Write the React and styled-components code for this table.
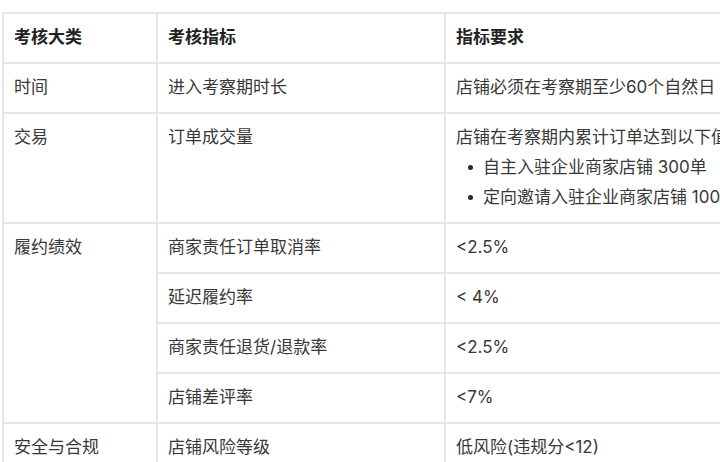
import React from "react";
import styled, { createGlobalStyle } from "styled-components";

const Global = createGlobalStyle`
  html, body { margin: 0; padding: 0; background: #fff; overflow: hidden; }
  body { width: 720px; height: 462px; }
`;

const Page = styled.div`
  padding: 12px 0 0 2px;
  width: 720px;
  overflow: hidden;
  font-family: Inter, "Noto Sans CJK SC", sans-serif;
`;

const Table = styled.table`
  border-collapse: collapse;
  table-layout: fixed;
  width: 900px;
  font-size: 17px;
  line-height: 24px;
  color: #383838;
`;

const Cell = styled.td`
  border: 2px solid #e6e6e6;
  padding: 11px 10px 13px;
  vertical-align: top;
  text-align: left;
  white-space: nowrap;
`;

const Head = styled(Cell).attrs({ as: "th" })`
  font-weight: 700;
  color: #222;
`;

const Bullets = styled.ul`
  margin: 0;
  padding: 0;
  list-style: none;
`;

const Bullet = styled.li`
  margin-top: 6px;
  display: flex;
  align-items: center;
`;

const Dot = styled.span`
  flex: none;
  width: 5px;
  height: 5px;
  border-radius: 50%;
  background: #2a2a2a;
  margin: 0 10px 0 12px;
`;

const perf = [
  ["商家责任订单取消率", "<2.5%"],
  ["延迟履约率", "< 4%"],
  ["商家责任退货/退款率", "<2.5%"],
  ["店铺差评率", "<7%"],
];

export default function App() {
  return (
    <>
      <Global />
      <Page>
        <Table>
          <colgroup>
            <col style={{ width: 154 }} />
            <col style={{ width: 288 }} />
            <col />
          </colgroup>
          <thead>
            <tr>
              <Head>考核大类</Head>
              <Head>考核指标</Head>
              <Head>指标要求</Head>
            </tr>
          </thead>
          <tbody>
            <tr>
              <Cell>时间</Cell>
              <Cell>进入考察期时长</Cell>
              <Cell>店铺必须在考察期至少60个自然日</Cell>
            </tr>
            <tr>
              <Cell>交易</Cell>
              <Cell>订单成交量</Cell>
              <Cell>
                店铺在考察期内累计订单达到以下值
                <Bullets>
                  <Bullet><Dot />自主入驻企业商家店铺 300单</Bullet>
                  <Bullet><Dot />定向邀请入驻企业商家店铺 1000单</Bullet>
                </Bullets>
              </Cell>
            </tr>
            {perf.map(([k, v], i) => (
              <tr key={k}>
                {i === 0 && <Cell rowSpan={4}>履约绩效</Cell>}
                <Cell>{k}</Cell>
                <Cell>{v}</Cell>
              </tr>
            ))}
            <tr>
              <Cell>安全与合规</Cell>
              <Cell>店铺风险等级</Cell>
              <Cell>低风险(违规分&lt;12)</Cell>
            </tr>
          </tbody>
        </Table>
      </Page>
    </>
  );
}
